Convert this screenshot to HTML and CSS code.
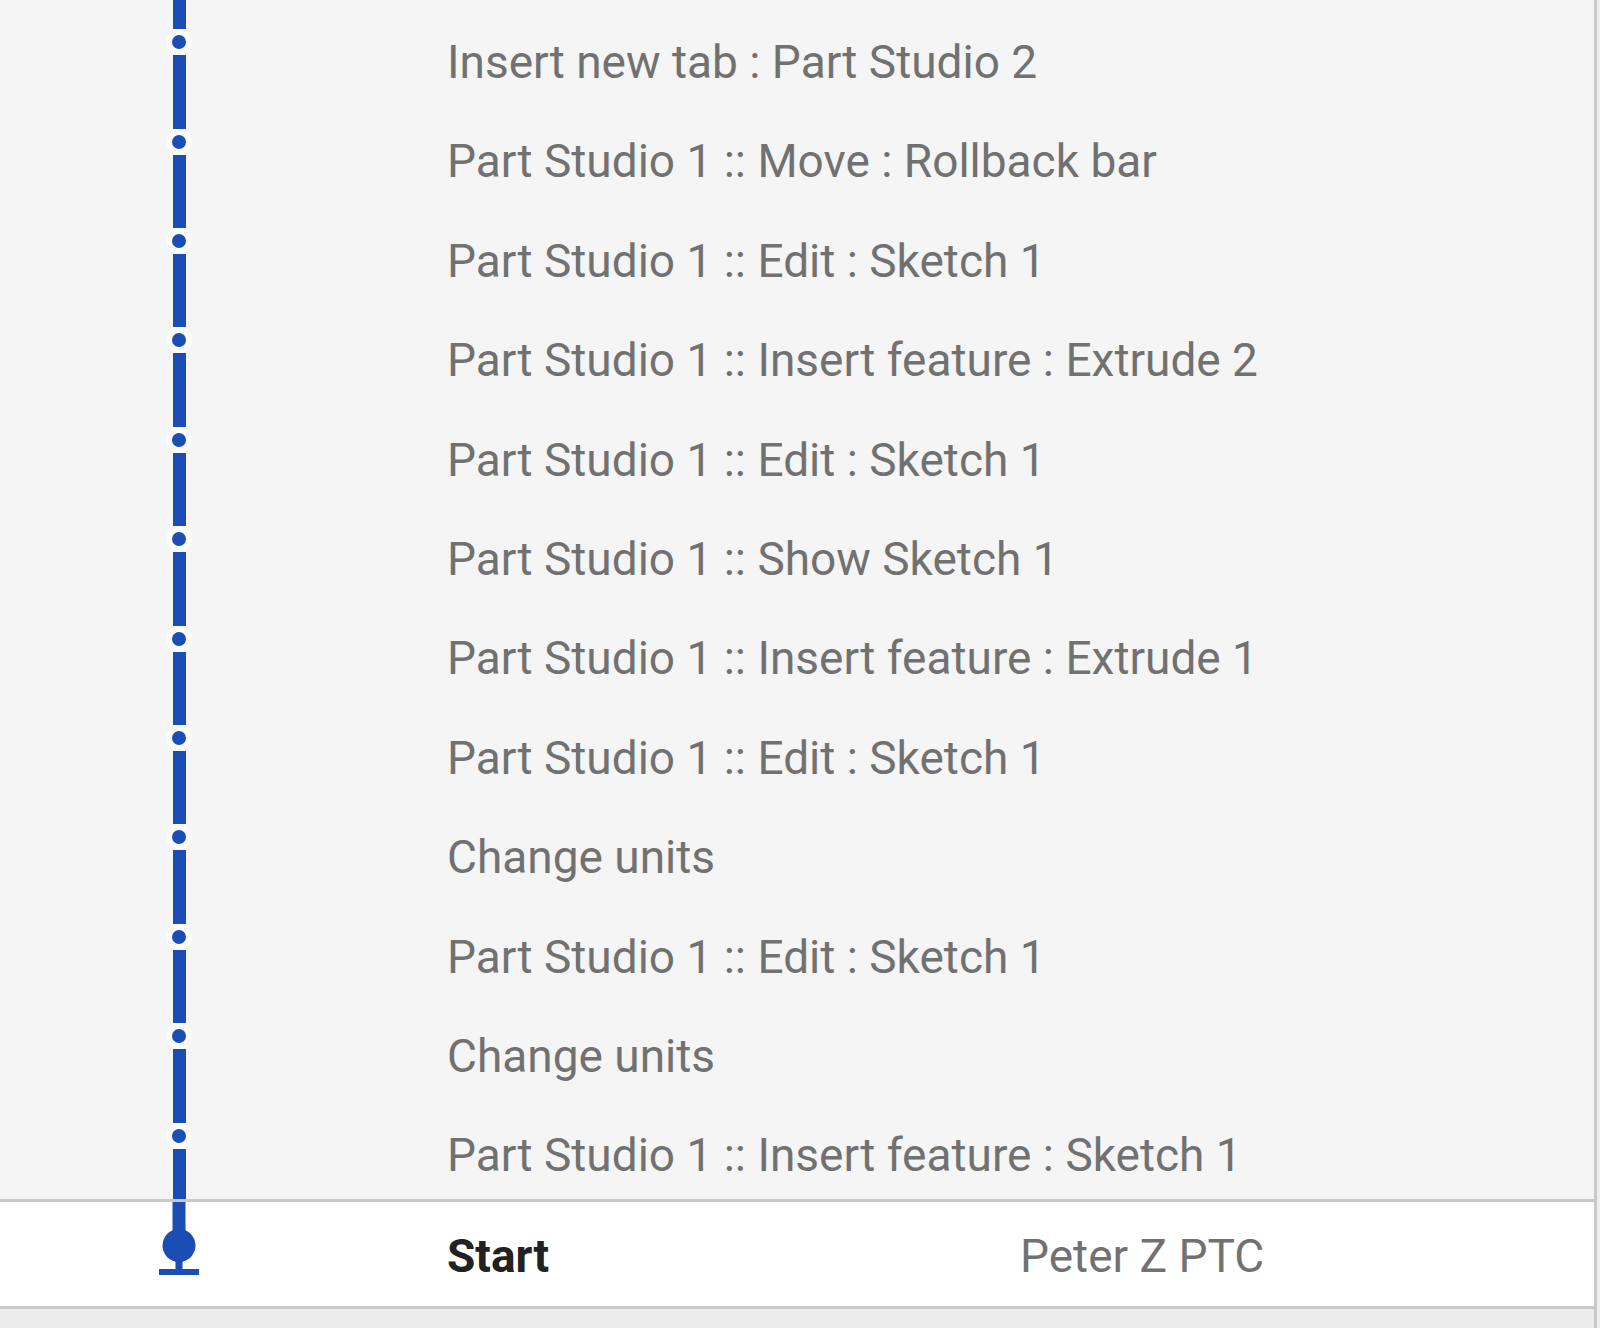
FILE: index.html
```html
<!DOCTYPE html>
<html lang="en">
<head>
    <meta charset="UTF-8">
    <title>Version history</title>
    <link rel="stylesheet" href="styles.css">
</head>
<body>
    <div class="history">
        <!-- Scrolled to the bottom: the line keeps going above the fold -->
        <div class="entries">
            <div class="more">
                <div class="rail"><span class="seg"></span></div>
            </div>
            <div class="entry">
                <div class="rail"><span class="seg top"></span><span class="dot"></span><span class="seg"></span></div>
                <div class="label">Insert new tab : Part Studio 2</div>
            </div>
            <div class="entry">
                <div class="rail"><span class="seg top"></span><span class="dot"></span><span class="seg"></span></div>
                <div class="label">Part Studio 1 :: Move : Rollback bar</div>
            </div>
            <div class="entry">
                <div class="rail"><span class="seg top"></span><span class="dot"></span><span class="seg"></span></div>
                <div class="label">Part Studio 1 :: Edit : Sketch 1</div>
            </div>
            <div class="entry">
                <div class="rail"><span class="seg top"></span><span class="dot"></span><span class="seg"></span></div>
                <div class="label">Part Studio 1 :: Insert feature : Extrude 2</div>
            </div>
            <div class="entry">
                <div class="rail"><span class="seg top"></span><span class="dot"></span><span class="seg"></span></div>
                <div class="label">Part Studio 1 :: Edit : Sketch 1</div>
            </div>
            <div class="entry">
                <div class="rail"><span class="seg top"></span><span class="dot"></span><span class="seg"></span></div>
                <div class="label">Part Studio 1 :: Show Sketch 1</div>
            </div>
            <div class="entry">
                <div class="rail"><span class="seg top"></span><span class="dot"></span><span class="seg"></span></div>
                <div class="label">Part Studio 1 :: Insert feature : Extrude 1</div>
            </div>
            <div class="entry">
                <div class="rail"><span class="seg top"></span><span class="dot"></span><span class="seg"></span></div>
                <div class="label">Part Studio 1 :: Edit : Sketch 1</div>
            </div>
            <div class="entry">
                <div class="rail"><span class="seg top"></span><span class="dot"></span><span class="seg"></span></div>
                <div class="label">Change units</div>
            </div>
            <div class="entry">
                <div class="rail"><span class="seg top"></span><span class="dot"></span><span class="seg"></span></div>
                <div class="label">Part Studio 1 :: Edit : Sketch 1</div>
            </div>
            <div class="entry">
                <div class="rail"><span class="seg top"></span><span class="dot"></span><span class="seg"></span></div>
                <div class="label">Change units</div>
            </div>
            <div class="entry">
                <div class="rail"><span class="seg top"></span><span class="dot"></span><span class="seg"></span></div>
                <div class="label">Part Studio 1 :: Insert feature : Sketch 1</div>
            </div>
        </div>

        <!-- Start version -->
        <div class="start">
            <div class="rail">
                <svg class="start-mark" width="40" height="73" viewBox="0 0 40 73">
                    <rect x="13.5" y="0" width="13" height="30" fill="#1b4db4"/>
                    <circle cx="20" cy="43.5" r="16.5" fill="#1b4db4"/>
                    <rect x="16.5" y="58" width="7" height="10" fill="#1b4db4"/>
                    <rect x="0" y="67" width="40" height="6" fill="#1b4db4"/>
                </svg>
            </div>
            <div class="start-name">Start</div>
            <div class="start-user">Peter Z PTC</div>
        </div>

        <div class="footer"></div>
    </div>
</body>
</html>
```

FILE: styles.css
```css
html, body {
    margin: 0;
    padding: 0;
}

body {
    font-family: Roboto, "Noto Sans", sans-serif;
    background-color: #efefef;
    width: 1600px;
    height: 1328px;
    overflow: hidden;
}

.history {
    width: 1594px;
    border-right: 3px solid #c9c9c9;
    background-color: #f5f5f5;
}

.entries {
    height: 1199px;
    overflow: hidden;
    display: flex;
    flex-direction: column;
    justify-content: flex-end;
    border-bottom: 3px solid #c9c9c9;
}

.more {
    flex: 1;
    display: flex;
}

.entry {
    flex: 0 0 99.4px;
    height: 99.4px;
    display: flex;
}

.rail {
    width: 358px;
    flex: 0 0 358px;
    display: flex;
    flex-direction: column;
    align-items: center;
}

.seg {
    width: 13px;
    flex: 1;
    background-color: #1b4db4;
}

.seg.top {
    flex: 0 0 23px;
}

.dot {
    width: 14px;
    height: 14px;
    flex: 0 0 auto;
    border: 6px solid #fbfbfb;
    border-radius: 50%;
    background-color: #1b4db4;
}

.label {
    margin-left: 89px;
    padding-top: 12px;
    display: flex;
    align-items: center;
    font-size: 46px;
    color: #717171;
    white-space: nowrap;
}

.start {
    height: 104px;
    display: flex;
    align-items: center;
    background-color: #ffffff;
    border-bottom: 3px solid #c9c9c9;
}

.start .rail {
    align-self: stretch;
}

.start-name {
    width: 573px;
    margin-left: 89px;
    padding-top: 4px;
    font-size: 46px;
    font-weight: bold;
    color: #222222;
}

.start-user {
    padding-top: 4px;
    font-size: 46px;
    color: #717171;
}

.footer {
    height: 30px;
    background-color: #ececec;
}
```
